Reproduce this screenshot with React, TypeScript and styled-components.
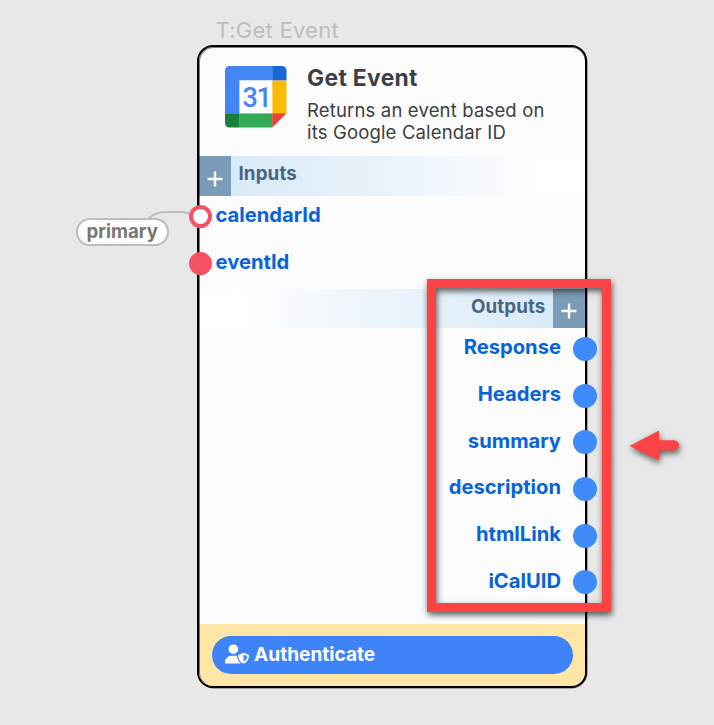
import React from "react";
import styled, { createGlobalStyle } from "styled-components";
import { FaUserShield } from "react-icons/fa6";

const GlobalStyle = createGlobalStyle`
  * { box-sizing: border-box; }
  body { margin: 0; background: #e8e8e8; font-family: Inter, sans-serif; font-optical-sizing: none; }
`;

const Canvas = styled.main`
  position: relative;
  width: 714px;
  height: 725px;
  overflow: hidden;
  background: #e8e8e8;
`;

const NodeName = styled.div`
  position: absolute;
  left: 215.5px;
  top: 17px;
  font-size: 22px;
  letter-spacing: 0.25px;
  line-height: 27px;
  color: #bdbdbd;
  white-space: nowrap;
`;

const Node = styled.section`
  position: absolute;
  left: 197px;
  top: 45px;
  width: 390px;
  height: 643px;
  display: flex;
  flex-direction: column;
  border: 2px solid #000;
  border-radius: 16px;
  background: #fcfcfc;
  box-shadow: 0.5px 0.5px 0 rgba(0, 0, 0, 0.6);

  &::after {
    content: "";
    position: absolute;
    inset: 0;
    border-radius: 14px;
    box-shadow: inset 0.5px 0.5px 0 0.5px rgba(0, 0, 0, 0.5);
    pointer-events: none;
  }
`;

const Header = styled.header`
  display: flex;
  gap: 20px;
  height: 109px;
  padding: 19px 0 0 26px;
`;

const HeaderText = styled.div`
  white-space: nowrap;
  color: #3c3f43;
`;

const Title = styled.h1`
  margin: -2px 0 7px;
  font-size: 22.8px;
  letter-spacing: 0.35px;
  line-height: 28px;
  font-weight: 700;
`;

const Description = styled.p`
  margin: 0;
  font-size: 18.5px;
  letter-spacing: 0.16px;
  line-height: 22px;
`;

const Band = styled.div<{ $side: "left" | "right" }>`
  display: flex;
  flex-direction: ${(p) => (p.$side === "left" ? "row" : "row-reverse")};
  height: ${(p) => (p.$side === "left" ? 40 : 39)}px;
  background: linear-gradient(
    to ${(p) => (p.$side === "left" ? "right" : "left")},
    #d9eaf7 8%,
    #edf5fc 55%,
    #fff 92%
  );
`;

const AddButton = styled.button`
  display: grid;
  place-items: center;
  width: 32px;
  height: 100%;
  padding: 5px 0 0;
  border: 0;
  background: #7a9cb8;
`;

const BandTitle = styled.h2`
  margin: 0;
  padding: 0 7.5px;
  font-size: 18.8px;
  letter-spacing: 0.1px;
  line-height: 35px;
  font-weight: 700;
  color: #4a6580;
`;

const Ports = styled.div<{ $height: number }>`
  height: ${(p) => p.$height}px;
`;

const PortRow = styled.div<{ $side: "left" | "right" }>`
  display: flex;
  flex-direction: ${(p) => (p.$side === "left" ? "row" : "row-reverse")};
  align-items: center;
  gap: ${(p) => (p.$side === "left" ? 3.5 : 12)}px;
  height: 46.7px;
  margin: ${(p) => (p.$side === "left" ? "0 0 0 -10px" : "0 -12px 0 0")};
  padding-bottom: ${(p) => (p.$side === "left" ? 6 : 5)}px;
`;

const PortLabel = styled.span`
  font-size: 20.2px;
  line-height: 26px;
  font-weight: 700;
  color: #0664d8;
  margin-top: -3px;
`;

const Port = styled.i<{ $kind: "filled" | "open" | "output" }>`
  position: relative;
  z-index: 1;
  width: ${(p) => (p.$kind === "output" ? 24 : 23)}px;
  height: ${(p) => (p.$kind === "output" ? 24 : 23)}px;
  border-radius: 50%;
  border: 4px solid ${(p) => (p.$kind === "output" ? "#3f8bfa" : "#f55266")};
  background: ${(p) =>
    p.$kind === "open" ? "#fff" : p.$kind === "output" ? "#3f8bfa" : "#f55266"};
`;

const Footer = styled.footer`
  margin-top: auto;
  height: 62px;
  padding: 12px 12.5px 0 13px;
  background: #ffe6a6;
  border-radius: 0 0 14px 14px;
`;

const AuthButton = styled.button`
  display: flex;
  align-items: center;
  gap: 5px;
  width: 100%;
  height: 37.5px;
  padding: 0 13px 1px;
  border: 0;
  border-radius: 19px;
  background: #3f83f8;
  color: #fff;
  font: 700 19.1px/26px Inter, sans-serif;
  font-optical-sizing: none;
`;

const Wire = styled.svg`
  position: absolute;
  left: 140px;
  top: 205px;
`;

const ValuePill = styled.div`
  position: absolute;
  left: 76px;
  top: 218px;
  width: 92.5px;
  height: 27.5px;
  border: 2px solid #bdbdbd;
  border-radius: 14px;
  background: #fff;
  color: #777;
  font-size: 18.6px;
  line-height: 23px;
  font-weight: 700;
  text-align: center;
`;

const HighlightFrame = styled.div`
  position: absolute;
  z-index: 2;
  left: 427px;
  top: 279px;
  width: 184px;
  height: 333px;
  border: 9px solid #fd4344;
  filter: drop-shadow(1px 3px 3px rgba(0, 0, 0, 0.65));
`;

const Arrow = styled.svg`
  position: absolute;
  left: 619.5px;
  top: 420px;
  filter: drop-shadow(1px 3px 3px rgba(0, 0, 0, 0.6));
`;

const Plus = () => (
  <svg width="16" height="16" viewBox="0 0 16 16" stroke="#fff" strokeWidth="2.4">
    <path d="M8 .5v15M.5 8h15" />
  </svg>
);

const CalendarLogo = () => (
  <svg width="62" height="62" viewBox="0 0 62 62">
    <path d="M4.500 0H47.200V14.600H14.600V47.200H0V4.500A4.500 4.500 0 0 1 4.500 0Z" fill="#4285f4" />
    <path d="M47.200 0H57A4.500 4.500 0 0 1 61.500 4.500V14.600H47.200Z" fill="#1967d2" />
    <path d="M47.200 14.600H61.500V47.200H47.200Z" fill="#fbbc04" />
    <path d="M14.600 47.200H47.200V61.500H14.600Z" fill="#34a853" />
    <path d="M0 47.200H14.600V61.500H4.500A4.500 4.500 0 0 1 0 57Z" fill="#188038" />
    <path d="M47.200 47.200H61.500L47.200 61.500Z" fill="#ea4335" />
    <path d="M14.600 14.600H47.200V47.200H14.600Z" fill="#fff" />
    <text x="17.400" y="40.900" fontFamily="Roboto, sans-serif" fontSize="27" fontWeight="500" letterSpacing="-1.200" fill="#4285f4">
      31
    </text>
  </svg>
);

const inputs = [
  { name: "calendarId", kind: "open" as const },
  { name: "eventId", kind: "filled" as const },
];
const outputs = ["Response", "Headers", "summary", "description", "htmlLink", "iCalUID"];

export default function App() {
  return (
    <Canvas>
      <GlobalStyle />
      <NodeName>T:Get Event</NodeName>
      <Wire width="60" height="20" fill="none" stroke="#bdbdbd" strokeWidth="2">
        <path d="M8 14C14 8 19 7 25 7H41C46 7 49 8 54 11" />
      </Wire>
      <ValuePill>primary</ValuePill>
      <Node>
        <Header>
          <CalendarLogo />
          <HeaderText>
            <Title>Get Event</Title>
            <Description>
              Returns an event based on
              <br />
              its Google Calendar ID
            </Description>
          </HeaderText>
        </Header>
        <Band $side="left">
          <AddButton aria-label="Add input"><Plus /></AddButton>
          <BandTitle>Inputs</BandTitle>
        </Band>
        <Ports $height={93}>
          {inputs.map((p) => (
            <PortRow key={p.name} $side="left">
              <Port $kind={p.kind} />
              <PortLabel>{p.name}</PortLabel>
            </PortRow>
          ))}
        </Ports>
        <Band $side="right">
          <AddButton aria-label="Add output"><Plus /></AddButton>
          <BandTitle>Outputs</BandTitle>
        </Band>
        <Ports $height={290}>
          {outputs.map((name) => (
            <PortRow key={name} $side="right">
              <Port $kind="output" />
              <PortLabel>{name}</PortLabel>
            </PortRow>
          ))}
        </Ports>
        <Footer>
          <AuthButton>
            <FaUserShield size={24} />
            Authenticate
          </AuthButton>
        </Footer>
      </Node>
      <HighlightFrame />
      <Arrow width="70" height="55" fill="#fd4344">
        <path d="M9.500 26 39 10.500V20.200H54A5.200 5.200 0 0 1 54 30.600H39V40.500Z" />
      </Arrow>
    </Canvas>
  );
}
